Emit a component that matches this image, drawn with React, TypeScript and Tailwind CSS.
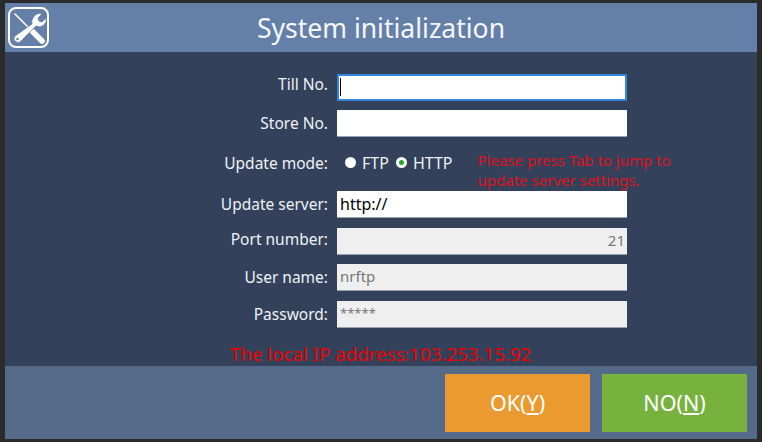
const font = { fontFamily: '"Noto Sans", "Open Sans", sans-serif' }

function ToolsIcon() {
  return (
    <svg width="44" height="44" viewBox="0 0 44 44" fill="none">
      <rect x="2" y="2" width="39" height="39" rx="7" stroke="#fff" strokeWidth="2" />
      <path d="M8 8 L21 21" stroke="#fff" strokeWidth="1.600" strokeLinecap="round" />
      <path d="M23 23 L35 35" stroke="#fff" strokeWidth="5.500" strokeLinecap="round" />
      <path d="M26 12 a7 7 0 0 1 9-4 l-4 4 1 3 3 1 4-4 a7 7 0 0 1-10 8 L14 35 a3.500 3.500 0 1 1-6-5 L25 18 a7 7 0 0 1 1-6z" fill="#fff" stroke="#6580a8" strokeWidth="0.800" />
      <circle cx="10.500" cy="33" r="1.300" fill="#6580a8" />
    </svg>
  )
}

function Row({ label, children, labelClass = '' }: { label: string; children: React.ReactNode; labelClass?: string }) {
  return (
    <div className="flex items-center">
      <div className={`w-[323px] text-right text-[15.500px] leading-[20px] text-[#eef2f7] ${labelClass}`}>{label}</div>
      <div className="ml-[9px] w-[290px]">{children}</div>
    </div>
  )
}

function Radio({ checked, label }: { checked?: boolean; label: string }) {
  return (
    <div className="flex items-center">
      <span className="w-[11px] h-[11px] rounded-full bg-white flex items-center justify-center">
        {checked && <span className="w-[5px] h-[5px] rounded-full bg-[#22a52a]" />}
      </span>
      <span className="ml-[6px] text-[16px] leading-[20px] text-[#eef2f7]">{label}</span>
    </div>
  )
}

export default function App() {
  return (
    <div className="w-[762px] h-[442px] bg-[#2b2b2b] pt-[3px] pl-[5px] pr-[5px] pb-[3px]" style={font}>
      <div className="h-[436px] flex flex-col bg-[#33415a]">
        <div className="relative h-[49px] bg-[#6580a8] flex items-center justify-center">
          <div className="absolute left-[2px] top-[3px]">
            <ToolsIcon />
          </div>
          <span className="text-[26.500px] leading-[34px] text-[#f4f6fa] translate-y-[1px]">System initialization</span>
        </div>

        <div className="flex-1 pt-[22px]">
          <Row label="Till No." labelClass="-translate-y-[3px]">
            <div className="h-[27px] bg-white border-2 border-[#2f86dc] flex items-center pl-[1px]">
              <span className="w-[1px] h-[18px] bg-black" />
            </div>
          </Row>
          <div className="mt-[9px]">
            <Row label="Store No.">
              <div className="h-[27px] bg-white border-b border-[#9aa3b0]" />
            </Row>
          </div>
          <div className="flex items-center h-[20px] mt-[16px]">
            <div className="w-[323px] text-right text-[15.500px] leading-[20px] text-[#eef2f7]">Update mode:</div>
            <div className="ml-[17px] flex items-center gap-[7px]">
              <Radio label="FTP" />
              <Radio checked label="HTTP" />
            </div>
            <div className="ml-[25px] text-[15px] leading-[20px] text-[#e0101c] w-[210px] translate-y-[7px] whitespace-nowrap">
              Please press Tab to jump to
              <br />
              update server settings.
            </div>
          </div>
          <div className="mt-[18px]">
            <Row label="Update server:">
              <div className="h-[27px] bg-white border-b border-[#9aa3b0] flex items-center pl-[3px] text-[16px] text-black">http://</div>
            </Row>
          </div>
          <div className="mt-[10px]">
            <Row label="Port number:" labelClass="-translate-y-[2px]">
              <div className="h-[27px] bg-[#efefef] border-b border-[#9aa3b0] flex items-center justify-end pr-[2px] text-[15px] text-[#777]">21</div>
            </Row>
          </div>
          <div className="mt-[9px]">
            <Row label="User name:">
              <div className="h-[27px] bg-[#efefef] border-b border-[#9aa3b0] flex items-center pl-[3px] text-[15px] text-[#777]">nrftp</div>
            </Row>
          </div>
          <div className="mt-[10px]">
            <Row label="Password:">
              <div className="h-[27px] bg-[#efefef] border-b border-[#9aa3b0] flex items-center pl-[3px] text-[13px] text-[#777]">*****</div>
            </Row>
          </div>
          <div className="mt-[14px] pl-[225px] text-[18.700px] leading-[24px] text-[#f00000] whitespace-nowrap">The local IP address:103.253.15.92</div>
        </div>

        <div className="h-[74px] bg-[#546a88] flex justify-end pt-[8px] pr-[10px] gap-[12px]">
          <button className="w-[145px] h-[58px] bg-[#ea9a2e] text-white text-[21.500px] leading-[54px]">
            OK(<span className="underline underline-offset-2">Y</span>)
          </button>
          <button className="w-[145px] h-[58px] bg-[#77b23e] text-white text-[21.500px] leading-[54px]">
            NO(<span className="underline underline-offset-2">N</span>)
          </button>
        </div>
      </div>
    </div>
  )
}
